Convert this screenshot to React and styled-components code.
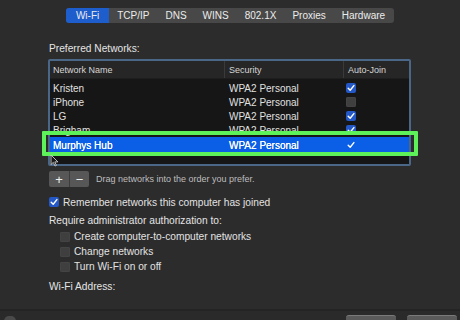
import React from 'react';
import styled, { createGlobalStyle } from 'styled-components';

const GlobalStyle = createGlobalStyle`
  html, body {
    margin: 0;
    padding: 0;
    background: #2c2c2c;
  }
  body {
    font-family: "Liberation Sans", Arial, sans-serif;
    -webkit-font-smoothing: antialiased;
  }
`;

const tabs = ['Wi-Fi', 'TCP/IP', 'DNS', 'WINS', '802.1X', 'Proxies', 'Hardware'];

const networks = [
    { name: 'Kristen', security: 'WPA2 Personal', auto: true },
    { name: 'iPhone', security: 'WPA2 Personal', auto: false },
    { name: 'LG', security: 'WPA2 Personal', auto: true },
    { name: 'Brigham', security: 'WPA2 Personal', auto: true },
    { name: 'Murphys Hub', security: 'WPA2 Personal', auto: true, selected: true },
];

const adminOptions = [
    'Create computer-to-computer networks',
    'Change networks',
    'Turn Wi-Fi on or off',
];

function Check({ checked, plain }) {
    return (
        <CheckBox $checked={checked} $plain={plain}>
            {checked && (
                <svg width="8" height="8" viewBox="0 0 8 8">
                    <path d="M1.2 4.2 L3.2 6.2 L6.9 1.6" fill="none" stroke="#fff" strokeWidth="1.4" strokeLinecap="round" strokeLinejoin="round" />
                </svg>
            )}
        </CheckBox>
    );
}

function App() {
    return (
        <>
            <GlobalStyle />
            <Window>
                <TabBar>
                    <Segments>
                        {tabs.map((t, i) => (
                            <Tab key={t} $active={i === 0}>{t}</Tab>
                        ))}
                    </Segments>
                </TabBar>

                <Content>
                    <Label>Preferred Networks:</Label>
                    <Table>
                        <HeaderRow>
                            <HeadCell>Network Name</HeadCell>
                            <HeadCell $sep>Security</HeadCell>
                            <HeadCell $sep>Auto-Join</HeadCell>
                        </HeaderRow>
                        <Body>
                            {networks.map((n) => (
                                <Row key={n.name} $selected={n.selected}>
                                    <Cell>{n.name}</Cell>
                                    <Cell>{n.security}</Cell>
                                    <Cell>
                                        <Check checked={n.auto} plain={n.selected} />
                                    </Cell>
                                </Row>
                            ))}
                        </Body>
                    </Table>

                    <ControlRow>
                        <PlusMinus>
                            <PMButton>+</PMButton>
                            <PMButton>−</PMButton>
                        </PlusMinus>
                        <Hint>Drag networks into the order you prefer.</Hint>
                    </ControlRow>

                    <OptionRow>
                        <Check checked />
                        <OptionText>Remember networks this computer has joined</OptionText>
                    </OptionRow>

                    <Label $top={7}>Require administrator authorization to:</Label>

                    <SubOptions>
                        {adminOptions.map((o) => (
                            <OptionRow key={o} $indent>
                                <Check />
                                <OptionText>{o}</OptionText>
                            </OptionRow>
                        ))}
                    </SubOptions>

                    <Label $top={7}>Wi-Fi Address:</Label>
                </Content>

                <Footer>
                    <HelpDot />
                    <FooterButtons>
                        <FooterButton />
                        <FooterButton />
                    </FooterButtons>
                </Footer>

                <Highlight />
                <Cursor>
                    <svg width="9" height="13" viewBox="0 0 9 13">
                        <path d="M1 1 L1 10.5 L3.3 8.4 L5 12 L6.4 11.4 L4.8 7.9 L7.9 7.9 Z" fill="#1a1a1a" stroke="#cfcfcf" strokeWidth="0.9" strokeLinejoin="round" />
                    </svg>
                </Cursor>
            </Window>
        </>
    );
}

const Window = styled.div`
    position: relative;
    width: 460px;
    height: 320px;
    overflow: hidden;
    background: #2c2c2c;
    display: flex;
    flex-direction: column;
    color: #e2e2e2;
`;

const TabBar = styled.div`
    display: flex;
    justify-content: center;
    padding-top: 8px;
`;

const Segments = styled.div`
    display: flex;
    height: 15px;
    background: #484848;
    border-radius: 3px;
    overflow: hidden;
`;

const Tab = styled.div`
    display: flex;
    align-items: center;
    padding: 0 8px;
    font-size: 10px;
    color: #ececec;
    background: ${props => props.$active ? '#1d5dcc' : 'transparent'};

    &:first-child {
        padding: 0 10px;
    }
    &:last-child {
        padding-right: 9px;
    }
`;

const Content = styled.div`
    display: flex;
    flex-direction: column;
    padding: 0 49px 0 48px;
    flex: 1;
`;

const Label = styled.div`
    font-size: 10.2px;
    line-height: 12px;
    color: #e4e4e4;
    margin-top: ${props => props.$top ?? 20}px;
    padding-left: 1px;
`;

const Table = styled.div`
    margin-top: 4px;
    height: 107px;
    border: 2px solid #4b6787;
    border-radius: 2px;
    background: #161616;
    display: flex;
    flex-direction: column;
    box-sizing: border-box;
`;

const HeaderRow = styled.div`
    display: grid;
    grid-template-columns: 174px 119px 1fr;
    height: 17px;
    background: #262626;
    border-bottom: 1px solid #1e1e1e;
`;

const HeadCell = styled.div`
    display: flex;
    align-items: center;
    padding-left: ${props => props.$sep ? 4 : 3}px;
    font-size: 9px;
    color: #d6d6d6;
    border-left: ${props => props.$sep ? '1px solid #3a3a3a' : 'none'};
`;

const Body = styled.div`
    padding-top: 2px;
    display: flex;
    flex-direction: column;
`;

const Row = styled.div`
    display: grid;
    grid-template-columns: 174px 119px 1fr;
    height: ${props => props.$selected ? 16 : 14}px;
    background: ${props => props.$selected ? '#0b5fe6' : 'transparent'};
    color: ${props => props.$selected ? '#ffffff' : '#e0e0e0'};
    text-shadow: ${props => props.$selected ? '0 0 0.4px #fff' : 'none'};
`;

const Cell = styled.div`
    display: flex;
    align-items: center;
    padding-left: 3px;
    font-size: 10px;

    &:nth-child(2) {
        padding-left: 5px;
    }
    &:nth-child(3) {
        padding-left: 3px;
    }
`;

const CheckBox = styled.span`
    display: inline-flex;
    align-items: center;
    justify-content: center;
    width: 10px;
    height: 10px;
    flex-shrink: 0;
    border-radius: 2px;
    background: ${props => props.$plain ? 'transparent' : props.$checked ? '#2458c6' : '#3f3f3f'};
    box-shadow: ${props => props.$checked || props.$plain ? 'none' : 'inset 0 0 0 0.5px #4a4a4a'};
`;

const ControlRow = styled.div`
    display: flex;
    align-items: center;
    margin-top: 5px;
    padding-left: 1px;
`;

const PlusMinus = styled.div`
    display: flex;
    height: 16px;
    border-radius: 2px;
    overflow: hidden;
    background: #575757;
`;

const PMButton = styled.div`
    width: 20px;
    display: flex;
    align-items: center;
    justify-content: center;
    font-size: 13px;
    color: #f0f0f0;
    line-height: 1;

    & + & {
        border-left: 1px solid #3c3c3c;
        width: 19px;
    }
`;

const Hint = styled.div`
    margin-left: 7px;
    font-size: 9px;
    color: #bdbdbd;
`;

const OptionRow = styled.div`
    display: flex;
    align-items: center;
    gap: 4px;
    margin-top: ${props => props.$indent ? 0 : 9}px;
    height: ${props => props.$indent ? 15 : 12}px;
    padding-left: ${props => props.$indent ? 12 : 1}px;
`;

const OptionText = styled.span`
    font-size: 10.2px;
    color: #e2e2e2;
`;

const SubOptions = styled.div`
    display: flex;
    flex-direction: column;
    margin-top: 2px;
`;

const Footer = styled.div`
    height: 9px;
    border-top: 2px solid #242424;
    background: #2a2a2a;
    display: flex;
    justify-content: space-between;
    align-items: flex-end;
    padding: 0 3px 0 4px;
`;

const HelpDot = styled.div`
    width: 12px;
    height: 5px;
    border-radius: 6px 6px 0 0;
    background: #4a4a4a;
    margin-bottom: -1px;
`;

const FooterButtons = styled.div`
    display: flex;
    gap: 11px;
`;

const FooterButton = styled.div`
    width: 50px;
    height: 4px;
    background: #5a5a5a;
    border-top: 1px solid #7a7a7a;
    border-radius: 3px 3px 0 0;
`;

const Highlight = styled.div`
    position: absolute;
    left: 42px;
    top: 131px;
    width: 376px;
    height: 25px;
    box-sizing: border-box;
    border: 4px solid #5df25a;
    border-radius: 1px;
    pointer-events: none;
`;

const Cursor = styled.div`
    position: absolute;
    left: 50px;
    top: 154px;
    line-height: 0;
`;

export default App;
